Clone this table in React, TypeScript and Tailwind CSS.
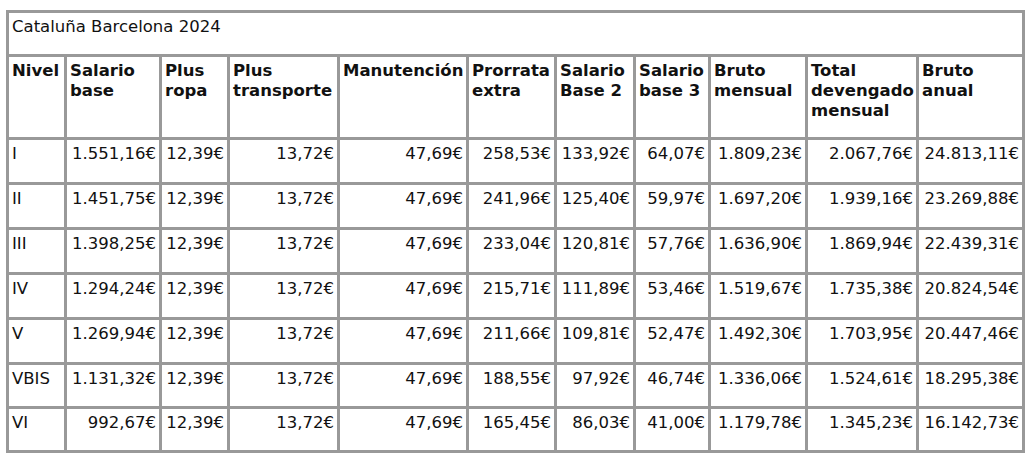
import { Fragment } from "react";

const headers: string[][] = [
  ["Nivel"],
  ["Salario", "base"],
  ["Plus", "ropa"],
  ["Plus", "transporte"],
  ["Manutención"],
  ["Prorrata", "extra"],
  ["Salario", "Base 2"],
  ["Salario", "base 3"],
  ["Bruto", "mensual"],
  ["Total", "devengado", "mensual"],
  ["Bruto", "anual"],
];

const rows: { nivel: string; values: string[]; h: string }[] = [
  { nivel: "I", values: ["1.551,16€", "12,39€", "13,72€", "47,69€", "258,53€", "133,92€", "64,07€", "1.809,23€", "2.067,76€", "24.813,11€"], h: "h-[42px]" },
  { nivel: "II", values: ["1.451,75€", "12,39€", "13,72€", "47,69€", "241,96€", "125,40€", "59,97€", "1.697,20€", "1.939,16€", "23.269,88€"], h: "h-[42px]" },
  { nivel: "III", values: ["1.398,25€", "12,39€", "13,72€", "47,69€", "233,04€", "120,81€", "57,76€", "1.636,90€", "1.869,94€", "22.439,31€"], h: "h-[42px]" },
  { nivel: "IV", values: ["1.294,24€", "12,39€", "13,72€", "47,69€", "215,71€", "111,89€", "53,46€", "1.519,67€", "1.735,38€", "20.824,54€"], h: "h-[42px]" },
  { nivel: "V", values: ["1.269,94€", "12,39€", "13,72€", "47,69€", "211,66€", "109,81€", "52,47€", "1.492,30€", "1.703,95€", "20.447,46€"], h: "h-[42px]" },
  { nivel: "VBIS", values: ["1.131,32€", "12,39€", "13,72€", "47,69€", "188,55€", "97,92€", "46,74€", "1.336,06€", "1.524,61€", "18.295,38€"], h: "h-[41px]" },
  { nivel: "VI", values: ["992,67€", "12,39€", "13,72€", "47,69€", "165,45€", "86,03€", "41,00€", "1.179,78€", "1.345,23€", "16.142,73€"], h: "h-[41px]" },
];

export default function App() {
  return (
    <div className="min-h-screen bg-white pl-[6px] pt-[10px] font-['DejaVu_Sans',Verdana,sans-serif] text-[16.5px] leading-[20px] text-[#111]">
      <div className="grid w-[1019px] grid-cols-[55px_92px_65px_107px_126px_85px_76px_72px_94px_108px_103px] gap-[3px] border-[3px] border-[#999] bg-[#999]">
        <div className="col-span-11 h-[41px] bg-white px-[3px] pt-[4px]">Cataluña Barcelona 2024</div>

        {headers.map((lines, i) => (
          <div key={i} className="h-[80px] whitespace-nowrap bg-white px-[3px] pt-[4px] font-bold">
            {lines.map((line, j) => (
              <div key={j}>{line}</div>
            ))}
          </div>
        ))}

        {rows.map((row) => (
          <Fragment key={row.nivel}>
            <div className={`${row.h} bg-white px-[3px] pt-[4px]`}>{row.nivel}</div>
            {row.values.map((v, j) => (
              <div key={j} className="whitespace-nowrap bg-white px-[3px] pt-[4px] text-right">
                {v}
              </div>
            ))}
          </Fragment>
        ))}
      </div>
    </div>
  );
}
